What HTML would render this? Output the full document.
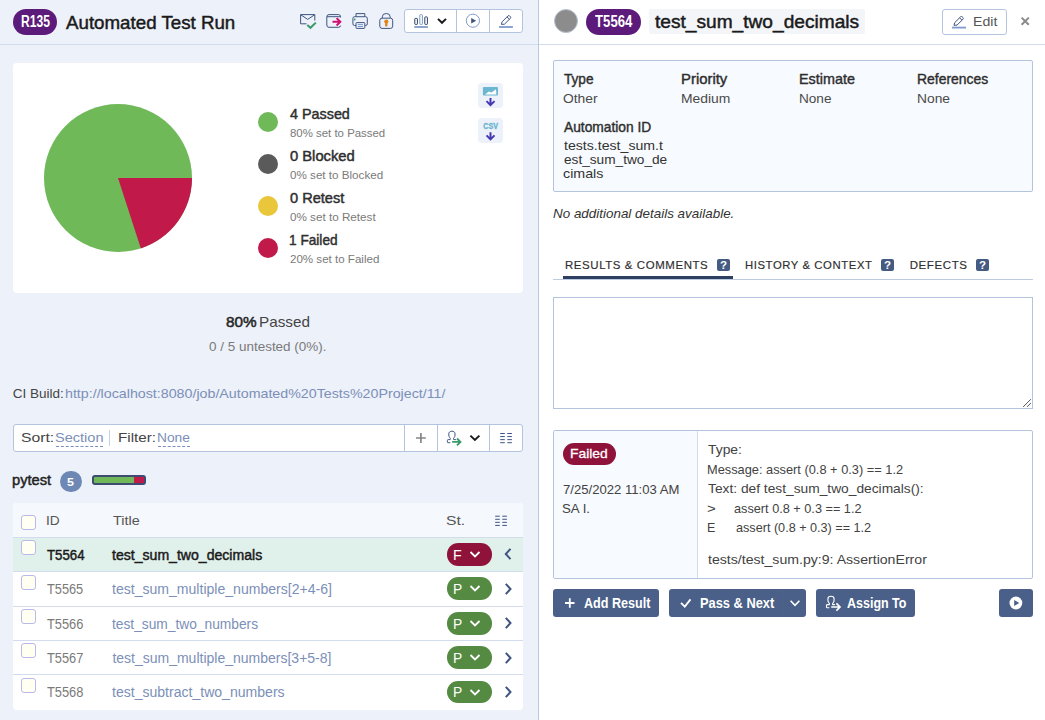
<!DOCTYPE html>
<html lang="en"><head><meta charset="utf-8"><title>Automated Test Run - TestRail</title>
<style>
html,body{margin:0;padding:0;}
body{width:1045px;height:720px;position:relative;overflow:hidden;background:#fff;font-family:"Liberation Sans",sans-serif;}
.b{position:absolute;display:block;}
.t{position:absolute;white-space:pre;transform-origin:0 50%;display:block;}
</style></head><body>
<div class="b" style="left:0px;top:0px;width:538px;height:720px;background:#edf1f9;"></div>
<div class="b" style="left:538px;top:0px;width:1px;height:720px;background:#bac8df;"></div>
<div class="b" style="left:0px;top:44px;width:538px;height:1px;background:#d3dcec;"></div>
<div class="b" style="left:539px;top:44px;width:506px;height:1px;background:#d3dcec;"></div>
<div class="b" style="left:13px;top:9px;width:44px;height:26px;background:#5c1a7a;border-radius:13px;"></div>
<span class="t" style="left:20.87px;top:13.63px;font-size:15.8px;line-height:15.8px;color:#fff;font-weight:bold;transform:scaleX(0.7662);">R135</span>
<span class="t" style="left:66.15px;top:14.63px;font-size:17.8px;line-height:17.8px;color:#1a1a1a;-webkit-text-stroke:0.45px #1a1a1a;transform:scaleX(1.0528);">Automated Test Run</span>
<div class="b" style="left:404px;top:9px;width:119px;height:24px;background:#fff;border:1px solid #b4c4de;border-radius:3px;box-sizing:border-box;"></div>
<div class="b" style="left:456px;top:10px;width:1px;height:22px;background:#b4c4de;"></div>
<div class="b" style="left:489px;top:10px;width:1px;height:22px;background:#b4c4de;"></div>
<svg class="b" style="left:296px;top:8px" width="228" height="26" viewBox="296 8 228 26"><path d="M306.5 23.8 H300.6 V14.6 H314.8 V20.5 M300.8 14.8 L307.7 19.4 L314.6 14.8" fill="none" stroke="#3f5480" stroke-width="1"/><path d="M307.3 25 L310.5 27.8 L315.8 22.6" fill="none" stroke="#3a9a6a" stroke-width="2"/><path d="M340.6 17.5 V16.8 Q340.6 14.6 338.4 14.6 H329 Q326.8 14.6 326.8 16.8 V25 Q326.8 27.3 329 27.3 H338.4 Q340.6 27.3 340.6 25.6 M327 16.7 H340.4" fill="none" stroke="#3f5480" stroke-width="1"/><path d="M332.5 21.8 H339.8 M336.6 18.1 L340.3 21.8 L336.6 25.5" fill="none" stroke="#d10f6f" stroke-width="2"/><path d="M356 16.5 V13.6 H364.8 V16.5 M356 25.5 H354.6 Q352.9 25.5 352.9 23.8 V18.4 Q352.9 16.7 354.6 16.7 H365.6 Q367.3 16.7 367.3 18.4 V23.8 Q367.3 25.5 365.6 25.5 H364.8" fill="none" stroke="#3f5480" stroke-width="1"/><rect x="356" y="22.6" width="8.8" height="5.8" rx="0.8" fill="#edf1f9" stroke="#3f5480" stroke-width="1"/><path d="M357.8 24.6 H363 M357.8 26.5 H363" stroke="#6a8fd0" stroke-width="0.9"/><circle cx="354.7" cy="19.5" r="0.9" fill="#3a9a6a"/><path d="M382.3 18 V16.8 Q382.3 13.5 386.25 13.5 Q390.2 13.5 390.2 16.8 V18" fill="none" stroke="#3f5480" stroke-width="1"/><rect x="379.8" y="18.2" width="12.9" height="10.2" rx="2.2" fill="none" stroke="#3f5480" stroke-width="1"/><circle cx="386.3" cy="21.5" r="2.1" fill="#e08516"/><rect x="385.1" y="21.6" width="2.4" height="4.9" rx="0.8" fill="#e08516"/><rect x="414.8" y="18.4" width="2.6" height="6" rx="0.6" fill="none" stroke="#2e4060" stroke-width="1"/><rect x="419.8" y="14.7" width="2.6" height="9.7" rx="0.6" fill="none" stroke="#7f9bcb" stroke-width="1"/><rect x="424.8" y="16.9" width="2.6" height="7.5" rx="0.6" fill="none" stroke="#2e4060" stroke-width="1"/><path d="M414.3 27 H427.9" stroke="#7f9bcb" stroke-width="1.8"/><path d="M438 18.9 L442 22.8 L446 18.9" fill="none" stroke="#1a1a1a" stroke-width="2"/><circle cx="472.9" cy="20.7" r="6.6" fill="none" stroke="#7f9bcb" stroke-width="1"/><path d="M471.2 17.9 L476.2 20.7 L471.2 23.5 Z" fill="#3f5480"/><path d="M501.4 24.4 L502.09999999999997 21.799999999999997 L508.0 15.899999999999999 Q508.79999999999995 15.2 509.59999999999997 15.899999999999999 L510.4 16.7 Q511.09999999999997 17.5 510.4 18.299999999999997 L504.4 24.2 Z M507.0 16.9 L509.4 19.299999999999997" fill="none" stroke="#3f5480" stroke-width="1" stroke-linejoin="round"/><path d="M499 27 H512.9" stroke="#7f9bcb" stroke-width="1.8"/></svg>
<div class="b" style="left:13px;top:63px;width:510px;height:230px;background:#fff;border-radius:4px;"></div>
<svg class="b" style="left:44px;top:104px" width="148" height="148" viewBox="-74 -74 148 148"><circle r="74" fill="#70b959"/><path d="M0 0 L74 0 A74 74 0 0 1 22.867 70.378 Z" fill="#c2194b"/></svg>
<div class="b" style="left:258px;top:112px;width:20px;height:20px;background:#70b959;border-radius:50%;"></div>
<span class="t" style="left:290.08px;top:106.53px;font-size:14.5px;line-height:14.5px;color:#2e2e2e;-webkit-text-stroke:0.45px #2e2e2e;transform:scaleX(0.9899);">4 Passed</span>
<span class="t" style="left:289.73px;top:128.27px;font-size:11.5px;line-height:11.5px;color:#7a7a7a;transform:scaleX(0.9929);">80% set to Passed</span>
<div class="b" style="left:258px;top:154px;width:20px;height:20px;background:#5a5a5a;border-radius:50%;"></div>
<span class="t" style="left:289.85px;top:148.53px;font-size:14.5px;line-height:14.5px;color:#2e2e2e;-webkit-text-stroke:0.45px #2e2e2e;transform:scaleX(1.0162);">0 Blocked</span>
<span class="t" style="left:289.96px;top:170.27px;font-size:11.5px;line-height:11.5px;color:#7a7a7a;transform:scaleX(1.0123);">0% set to Blocked</span>
<div class="b" style="left:258px;top:196px;width:20px;height:20px;background:#e9c63a;border-radius:50%;"></div>
<span class="t" style="left:289.85px;top:190.53px;font-size:14.5px;line-height:14.5px;color:#2e2e2e;-webkit-text-stroke:0.45px #2e2e2e;transform:scaleX(1.0047);">0 Retest</span>
<span class="t" style="left:289.96px;top:212.27px;font-size:11.5px;line-height:11.5px;color:#7a7a7a;transform:scaleX(1.0152);">0% set to Retest</span>
<div class="b" style="left:258px;top:238px;width:20px;height:20px;background:#c2194b;border-radius:50%;"></div>
<span class="t" style="left:289.33px;top:232.53px;font-size:14.5px;line-height:14.5px;color:#2e2e2e;-webkit-text-stroke:0.45px #2e2e2e;transform:scaleX(0.9413);">1 Failed</span>
<span class="t" style="left:289.59px;top:254.27px;font-size:11.5px;line-height:11.5px;color:#7a7a7a;transform:scaleX(1.0052);">20% set to Failed</span>
<div class="b" style="left:478px;top:83px;width:25px;height:25px;background:#edf1f9;border-radius:4px;"></div>
<div class="b" style="left:478px;top:118px;width:25px;height:25px;background:#edf1f9;border-radius:4px;"></div>
<svg class="b" style="left:478px;top:83px" width="25" height="60" viewBox="478 83 25 60"><rect x="482.9" y="86.9" width="15.1" height="8.7" rx="0.8" fill="#6bb6d0"/><path d="M485 94.4 L488.8 91.4 L491.5 92.4 L496 89.3 L496.4 94.4 Z" fill="#fff"/><path d="M490.5 98 V105.3 M486.5 101.1 L490.5 105.1 L494.5 101.1" fill="none" stroke="#4538b3" stroke-width="2"/><path d="M490.5 132.3 V139.6 M486.5 135.4 L490.5 139.4 L494.5 135.4" fill="none" stroke="#4538b3" stroke-width="2"/><text x="490.6" y="129.4" font-family="Liberation Sans, sans-serif" font-weight="bold" font-size="8.2" fill="#6bb6d0" stroke="#6bb6d0" stroke-width="0.35" text-anchor="middle" textLength="14.6" lengthAdjust="spacingAndGlyphs">CSV</text></svg>
<span class="t" style="left:225.95px;top:314.73px;font-size:14.5px;line-height:14.5px;color:#262626;-webkit-text-stroke:0.5px #262626;transform:scaleX(1.0555);">80%</span>
<span class="t" style="left:258.94px;top:314.73px;font-size:14.5px;line-height:14.5px;color:#444;transform:scaleX(1.0534);">Passed</span>
<span class="t" style="left:209.10px;top:339.60px;font-size:13px;line-height:13px;color:#7a7a7a;transform:scaleX(1.0358);">0 / 5 untested (0%).</span>
<span class="t" style="left:12.73px;top:386.57px;font-size:13.5px;line-height:13.5px;color:#444;">CI Build:</span>
<span class="t" style="left:64.99px;top:386.57px;font-size:13.5px;line-height:13.5px;color:#7b8fb8;transform:scaleX(1.0546);">http://localhost:8080/job/Automated%20Tests%20Project/11/</span>
<div class="b" style="left:13px;top:424px;width:510px;height:28px;background:#fff;border:1px solid #b4c4de;border-radius:3px;box-sizing:border-box;"></div>
<div class="b" style="left:404px;top:425px;width:1px;height:26px;background:#b4c4de;"></div>
<div class="b" style="left:437px;top:425px;width:1px;height:26px;background:#b4c4de;"></div>
<div class="b" style="left:489px;top:425px;width:1px;height:26px;background:#b4c4de;"></div>
<div class="b" style="left:109px;top:430px;width:1px;height:16px;background:#c5d0e4;"></div>
<span class="t" style="left:21.08px;top:431.17px;font-size:13.5px;line-height:13.5px;color:#444;transform:scaleX(1.1655);">Sort:</span>
<span class="t" style="left:54.99px;top:431.17px;font-size:13.5px;line-height:13.5px;color:#7b8fb8;transform:scaleX(1.0777);">Section</span>
<div class="b" style="left:56px;top:446px;width:47px;height:0px;border-top:1px dashed #7b8fb8;"></div>
<span class="t" style="left:117.78px;top:431.17px;font-size:13.5px;line-height:13.5px;color:#444;transform:scaleX(1.1254);">Filter:</span>
<span class="t" style="left:157.30px;top:431.17px;font-size:13.5px;line-height:13.5px;color:#7b8fb8;transform:scaleX(1.0192);">None</span>
<div class="b" style="left:158px;top:446px;width:32px;height:0px;border-top:1px dashed #7b8fb8;"></div>
<svg class="b" style="left:410px;top:428px" width="110" height="20" viewBox="410 428 110 20"><path d="M416 438 H425.8 M420.9 433.1 V442.9" stroke="#858585" stroke-width="1.7"/><path d="M449.90 442.70 H448.20 Q447.40 442.70 447.40 441.90 V440.40 Q447.40 439.60 448.20 439.60 H450.20 Q450.80 438.60 449.70 437.60 Q448.80 436.70 448.80 435.10 V433.90 C448.80 432.10 450.10 431.20 451.90 431.20 C453.70 431.20 455.00 432.10 455.00 433.90 V435.10 Q455.00 436.70 454.10 437.60 Q453.00 438.60 453.60 439.60 H455.50" fill="none" stroke="#3f5480" stroke-width="1" stroke-linecap="round"/><path d="M452.1 441.9 H460 M457 438.5 L460.4 441.9 L457 445.3" fill="none" stroke="#3a9a6a" stroke-width="1.9"/><path d="M470.4 435.6 L474.9 439.9 L479.4 435.6" fill="none" stroke="#1a1a1a" stroke-width="2"/><path d="M500.2 433.50 H504.8 M507.3 433.50 H511.9 M500.2 436.57 H504.8 M507.3 436.57 H511.9 M500.2 439.64 H504.8 M507.3 439.64 H511.9 M500.2 442.71 H504.8 M507.3 442.71 H511.9 " stroke="#3f5480" stroke-width="1"/></svg>
<span class="t" style="left:12.48px;top:472.73px;font-size:14.5px;line-height:14.5px;color:#222;-webkit-text-stroke:0.45px #222;transform:scaleX(1.0133);">pytest</span>
<div class="b" style="left:60px;top:471px;width:22px;height:21px;background:#6e88b5;border-radius:11px;"></div>
<span class="t" style="left:67.02px;top:476.87px;font-size:11.5px;line-height:11.5px;color:#fff;font-weight:bold;transform:scaleX(1.0824);">5</span>
<div class="b" style="left:92px;top:475px;width:54px;height:10px;background:#70b959;border:2px solid #3d4c70;border-radius:3px;box-sizing:border-box;overflow:hidden;"></div>
<div class="b" style="left:134px;top:477px;width:10px;height:6px;background:#c2194b;"></div>
<div class="b" style="left:13px;top:503px;width:510px;height:207px;background:#fff;border-radius:4px;"></div>
<div class="b" style="left:13px;top:503px;width:510px;height:34px;background:#f5f8fd;border-radius:4px 4px 0 0;"></div>
<div class="b" style="left:13px;top:537px;width:510px;height:35px;background:#e0f0ea;"></div>
<div class="b" style="left:13px;top:537px;width:510px;height:1px;background:#d3dcec;"></div>
<div class="b" style="left:13px;top:571px;width:510px;height:1px;background:#d3dcec;"></div>
<div class="b" style="left:13px;top:606px;width:510px;height:1px;background:#d3dcec;"></div>
<div class="b" style="left:13px;top:640px;width:510px;height:1px;background:#d3dcec;"></div>
<div class="b" style="left:13px;top:674px;width:510px;height:1px;background:#d3dcec;"></div>
<div class="b" style="left:21px;top:515px;width:15px;height:15px;background:#fffff2;border:1px solid #b9b9ea;border-radius:3px;box-sizing:border-box;"></div>
<span class="t" style="left:46.37px;top:513.57px;font-size:13.5px;line-height:13.5px;color:#555;transform:scaleX(1.0134);">ID</span>
<span class="t" style="left:112.96px;top:513.57px;font-size:13.5px;line-height:13.5px;color:#555;transform:scaleX(1.0681);">Title</span>
<span class="t" style="left:446.09px;top:513.57px;font-size:13.5px;line-height:13.5px;color:#555;transform:scaleX(1.1656);">St.</span>
<div class="b" style="left:21px;top:540px;width:15px;height:15px;background:#fffff2;border:1px solid #b9b9ea;border-radius:3px;box-sizing:border-box;"></div>
<span class="t" style="left:47.15px;top:547.75px;font-size:14px;line-height:14px;color:#1a1a1a;-webkit-text-stroke:0.45px #1a1a1a;transform:scaleX(0.9482);">T5564</span>
<span class="t" style="left:112.36px;top:547.75px;font-size:14px;line-height:14px;color:#1a1a1a;-webkit-text-stroke:0.45px #1a1a1a;transform:scaleX(1.0054);">test_sum_two_decimals</span>
<div class="b" style="left:447px;top:543.0px;width:45px;height:22.6px;background:#8f123a;border-radius:11.3px;"></div>
<span class="t" style="left:452.85px;top:548.45px;font-size:14px;line-height:14px;color:#fff;transform:scaleX(1.0101);">F</span>
<svg class="b" style="left:469px;top:549.8px" width="12" height="9" viewBox="0 0 12 9"><path d="M1.5 2 L6 6.5 L10.5 2" fill="none" stroke="#fff" stroke-width="1.8"/></svg>
<svg class="b" style="left:503px;top:547.3px" width="10" height="14" viewBox="0 0 10 14"><path d="M7.5 1.8 L2.8 7 L7.5 12.2" fill="none" stroke="#3f5480" stroke-width="2"/></svg>
<div class="b" style="left:21px;top:575px;width:15px;height:15px;background:#fffff2;border:1px solid #b9b9ea;border-radius:3px;box-sizing:border-box;"></div>
<span class="t" style="left:47.34px;top:582.15px;font-size:14px;line-height:14px;color:#7a7a7a;transform:scaleX(0.9112);">T5565</span>
<span class="t" style="left:112.28px;top:582.15px;font-size:14px;line-height:14px;color:#7b8fb8;transform:scaleX(1.0040);">test_sum_multiple_numbers[2+4-6]</span>
<div class="b" style="left:447px;top:577.2px;width:45px;height:22.6px;background:#548a42;border-radius:11.3px;"></div>
<span class="t" style="left:453.49px;top:581.65px;font-size:14px;line-height:14px;color:#fff;transform:scaleX(0.9880);">P</span>
<svg class="b" style="left:469px;top:584.0px" width="12" height="9" viewBox="0 0 12 9"><path d="M1.5 2 L6 6.5 L10.5 2" fill="none" stroke="#fff" stroke-width="1.8"/></svg>
<svg class="b" style="left:503px;top:581.5px" width="10" height="14" viewBox="0 0 10 14"><path d="M2.8 1.8 L7.5 7 L2.8 12.2" fill="none" stroke="#3f5480" stroke-width="2"/></svg>
<div class="b" style="left:21px;top:609px;width:15px;height:15px;background:#fffff2;border:1px solid #b9b9ea;border-radius:3px;box-sizing:border-box;"></div>
<span class="t" style="left:46.85px;top:616.75px;font-size:14px;line-height:14px;color:#7a7a7a;transform:scaleX(0.9163);">T5566</span>
<span class="t" style="left:112.39px;top:616.75px;font-size:14px;line-height:14px;color:#7b8fb8;transform:scaleX(0.9828);">test_sum_two_numbers</span>
<div class="b" style="left:447px;top:612.0px;width:45px;height:22.6px;background:#548a42;border-radius:11.3px;"></div>
<span class="t" style="left:453.25px;top:617.45px;font-size:14px;line-height:14px;color:#fff;transform:scaleX(0.9880);">P</span>
<svg class="b" style="left:469px;top:618.8px" width="12" height="9" viewBox="0 0 12 9"><path d="M1.5 2 L6 6.5 L10.5 2" fill="none" stroke="#fff" stroke-width="1.8"/></svg>
<svg class="b" style="left:503px;top:616.3px" width="10" height="14" viewBox="0 0 10 14"><path d="M2.8 1.8 L7.5 7 L2.8 12.2" fill="none" stroke="#3f5480" stroke-width="2"/></svg>
<div class="b" style="left:21px;top:643px;width:15px;height:15px;background:#fffff2;border:1px solid #b9b9ea;border-radius:3px;box-sizing:border-box;"></div>
<span class="t" style="left:47.34px;top:651.15px;font-size:14px;line-height:14px;color:#7a7a7a;transform:scaleX(0.9137);">T5567</span>
<span class="t" style="left:112.39px;top:651.15px;font-size:14px;line-height:14px;color:#7b8fb8;">test_sum_multiple_numbers[3+5-8]</span>
<div class="b" style="left:447px;top:646.2px;width:45px;height:22.6px;background:#548a42;border-radius:11.3px;"></div>
<span class="t" style="left:453.49px;top:650.65px;font-size:14px;line-height:14px;color:#fff;transform:scaleX(0.9880);">P</span>
<svg class="b" style="left:469px;top:653.0px" width="12" height="9" viewBox="0 0 12 9"><path d="M1.5 2 L6 6.5 L10.5 2" fill="none" stroke="#fff" stroke-width="1.8"/></svg>
<svg class="b" style="left:503px;top:650.5px" width="10" height="14" viewBox="0 0 10 14"><path d="M2.8 1.8 L7.5 7 L2.8 12.2" fill="none" stroke="#3f5480" stroke-width="2"/></svg>
<div class="b" style="left:21px;top:678px;width:15px;height:15px;background:#fffff2;border:1px solid #b9b9ea;border-radius:3px;box-sizing:border-box;"></div>
<span class="t" style="left:46.85px;top:685.15px;font-size:14px;line-height:14px;color:#7a7a7a;transform:scaleX(0.9167);">T5568</span>
<span class="t" style="left:112.28px;top:685.15px;font-size:14px;line-height:14px;color:#7b8fb8;transform:scaleX(1.0035);">test_subtract_two_numbers</span>
<div class="b" style="left:447px;top:680.7px;width:45px;height:22.6px;background:#548a42;border-radius:11.3px;"></div>
<span class="t" style="left:453.49px;top:685.15px;font-size:14px;line-height:14px;color:#fff;transform:scaleX(0.9880);">P</span>
<svg class="b" style="left:469px;top:687.5px" width="12" height="9" viewBox="0 0 12 9"><path d="M1.5 2 L6 6.5 L10.5 2" fill="none" stroke="#fff" stroke-width="1.8"/></svg>
<svg class="b" style="left:503px;top:685px" width="10" height="14" viewBox="0 0 10 14"><path d="M2.8 1.8 L7.5 7 L2.8 12.2" fill="none" stroke="#3f5480" stroke-width="2"/></svg>
<svg class="b" style="left:494px;top:514px" width="14" height="14" viewBox="494 514 14 14"><path d="M495.2 516.20 H499.8 M502.3 516.20 H506.9 M495.2 519.27 H499.8 M502.3 519.27 H506.9 M495.2 522.34 H499.8 M502.3 522.34 H506.9 M495.2 525.41 H499.8 M502.3 525.41 H506.9 " stroke="#3f5480" stroke-width="1"/></svg>
<div class="b" style="left:554px;top:9px;width:24px;height:24px;background:#8c8c8c;border:1px solid #b9c3d6;border-radius:50%;box-sizing:border-box;"></div>
<div class="b" style="left:586px;top:9px;width:55px;height:26px;background:#5c1a7a;border-radius:13px;"></div>
<span class="t" style="left:595.07px;top:13.63px;font-size:15.8px;line-height:15.8px;color:#fff;font-weight:bold;transform:scaleX(0.8342);">T5564</span>
<div class="b" style="left:649px;top:9px;width:216px;height:25px;background:#f3f5f9;border-radius:2px;"></div>
<span class="t" style="left:655.31px;top:13.63px;font-size:17.8px;line-height:17.8px;color:#1a1a1a;-webkit-text-stroke:0.45px #1a1a1a;transform:scaleX(1.0757);">test_sum_two_decimals</span>
<div class="b" style="left:942px;top:9px;width:65px;height:26px;background:#fff;border:1px solid #b4c4de;border-radius:3px;box-sizing:border-box;"></div>
<span class="t" style="left:972.89px;top:15.17px;font-size:13.5px;line-height:13.5px;color:#555;transform:scaleX(1.0459);">Edit</span>
<svg class="b" style="left:950px;top:12px" width="84" height="20" viewBox="950 12 84 20"><path d="M954 25.3 L954.7 22.7 L960.6 16.8 Q961.4 16.1 962.2 16.8 L963 17.6 Q963.7 18.4 963 19.200000000000003 L957 25.1 Z M959.6 17.8 L962 20.200000000000003" fill="none" stroke="#3f5480" stroke-width="1" stroke-linejoin="round"/><path d="M952 27.6 H966" stroke="#7f9bcb" stroke-width="1.8"/><path d="M1021.6 17.6 L1028.8 24.8 M1028.8 17.6 L1021.6 24.8" stroke="#8a8a8a" stroke-width="2"/></svg>
<div class="b" style="left:553px;top:60px;width:480px;height:132px;background:#f7fafe;border:1px solid #b4c4de;border-radius:2px;box-sizing:border-box;"></div>
<span class="t" style="left:564.32px;top:72.43px;font-size:14.5px;line-height:14.5px;color:#2e2e2e;-webkit-text-stroke:0.4px #2e2e2e;transform:scaleX(0.9383);">Type</span>
<span class="t" style="left:563.06px;top:91.60px;font-size:13px;line-height:13px;color:#4a4a4a;transform:scaleX(1.0639);">Other</span>
<span class="t" style="left:680.94px;top:72.43px;font-size:14.5px;line-height:14.5px;color:#2e2e2e;-webkit-text-stroke:0.4px #2e2e2e;transform:scaleX(1.0262);">Priority</span>
<span class="t" style="left:681.47px;top:91.60px;font-size:13px;line-height:13px;color:#4a4a4a;transform:scaleX(1.0685);">Medium</span>
<span class="t" style="left:799.38px;top:72.43px;font-size:14.5px;line-height:14.5px;color:#2e2e2e;-webkit-text-stroke:0.4px #2e2e2e;transform:scaleX(0.9907);">Estimate</span>
<span class="t" style="left:798.90px;top:91.60px;font-size:13px;line-height:13px;color:#4a4a4a;transform:scaleX(1.0449);">None</span>
<span class="t" style="left:916.84px;top:72.43px;font-size:14.5px;line-height:14.5px;color:#2e2e2e;-webkit-text-stroke:0.4px #2e2e2e;transform:scaleX(0.9600);">References</span>
<span class="t" style="left:917.48px;top:91.60px;font-size:13px;line-height:13px;color:#4a4a4a;transform:scaleX(1.0620);">None</span>
<span class="t" style="left:564.40px;top:119.73px;font-size:14.5px;line-height:14.5px;color:#2e2e2e;-webkit-text-stroke:0.4px #2e2e2e;transform:scaleX(0.9495);">Automation ID</span>
<span class="t" style="left:564.19px;top:138.60px;font-size:13px;line-height:13px;color:#333;transform:scaleX(1.0870);">tests.test_sum.t</span>
<span class="t" style="left:563.59px;top:152.60px;font-size:13px;line-height:13px;color:#333;transform:scaleX(1.0497);">est_sum_two_de</span>
<span class="t" style="left:563.33px;top:166.60px;font-size:13px;line-height:13px;color:#333;transform:scaleX(1.0967);">cimals</span>
<span class="t" style="left:553.20px;top:206.57px;font-size:13.5px;line-height:13.5px;color:#333;font-style:italic;transform:scaleX(0.9943);">No additional details available.</span>
<div class="b" style="left:553px;top:279px;width:480px;height:1px;background:#bdcae0;"></div>
<div class="b" style="left:563px;top:276px;width:170px;height:3.4px;background:#2e4060;"></div>
<span class="t" style="left:565.21px;top:259.67px;font-size:11.5px;line-height:11.5px;color:#2e2e2e;letter-spacing:0.6px;-webkit-text-stroke:0.15px #2e2e2e;transform:scaleX(0.9943);">RESULTS &amp; COMMENTS</span>
<span class="t" style="left:744.82px;top:259.67px;font-size:11.5px;line-height:11.5px;color:#2e2e2e;letter-spacing:0.6px;-webkit-text-stroke:0.15px #2e2e2e;transform:scaleX(0.9831);">HISTORY &amp; CONTEXT</span>
<span class="t" style="left:909.68px;top:259.67px;font-size:11.5px;line-height:11.5px;color:#2e2e2e;letter-spacing:0.6px;-webkit-text-stroke:0.15px #2e2e2e;">DEFECTS</span>
<div class="b" style="left:717px;top:258.5px;width:13px;height:12.2px;background:#465b82;border-radius:2px;"></div>
<span class="t" style="left:720.01px;top:261.14px;font-size:10px;line-height:10px;color:#fff;font-weight:bold;transform:scaleX(1.1546);">?</span>
<div class="b" style="left:881px;top:258.5px;width:13px;height:12.2px;background:#465b82;border-radius:2px;"></div>
<span class="t" style="left:884.01px;top:261.14px;font-size:10px;line-height:10px;color:#fff;font-weight:bold;transform:scaleX(1.1546);">?</span>
<div class="b" style="left:976px;top:258.5px;width:13px;height:12.2px;background:#465b82;border-radius:2px;"></div>
<span class="t" style="left:979.01px;top:261.14px;font-size:10px;line-height:10px;color:#fff;font-weight:bold;transform:scaleX(1.1546);">?</span>
<div class="b" style="left:553px;top:297px;width:480px;height:112px;background:#fff;border:1px solid #b4c4de;box-sizing:border-box;"></div>
<svg class="b" style="left:1020px;top:396px" width="12" height="12" viewBox="1020 396 12 12"><path d="M1023.2 406.9 L1030.9 399.2 M1027 406.9 L1030.9 403" stroke="#555" stroke-width="1" fill="none"/></svg>
<div class="b" style="left:553px;top:430px;width:480px;height:149px;background:#fff;border:1px solid #b4c4de;border-radius:2px;box-sizing:border-box;"></div>
<div class="b" style="left:554px;top:431px;width:143px;height:147px;background:#f7fafe;"></div>
<div class="b" style="left:697px;top:431px;width:1px;height:147px;background:#d3dcec;"></div>
<div class="b" style="left:563px;top:443px;width:53px;height:22px;background:#8f123a;border-radius:11px;"></div>
<span class="t" style="left:570.49px;top:447.17px;font-size:13.5px;line-height:13.5px;color:#fff;-webkit-text-stroke:0.3px #fff;transform:scaleX(1.0278);">Failed</span>
<span class="t" style="left:562.70px;top:482.60px;font-size:13px;line-height:13px;color:#424242;transform:scaleX(1.0078);">7/25/2022 11:03 AM</span>
<span class="t" style="left:561.73px;top:501.60px;font-size:13px;line-height:13px;color:#424242;transform:scaleX(1.0194);">SA I.</span>
<span class="t" style="left:708.32px;top:443.40px;font-size:13px;line-height:13px;color:#424242;transform:scaleX(1.0674);">Type:</span>
<span class="t" style="left:707.02px;top:462.80px;font-size:13px;line-height:13px;color:#424242;transform:scaleX(0.9848);">Message: assert (0.8 + 0.3) == 1.2</span>
<span class="t" style="left:708.00px;top:482.40px;font-size:13px;line-height:13px;color:#424242;transform:scaleX(1.0585);">Text: def test_sum_two_decimals():</span>
<span class="t" style="left:707.27px;top:501.80px;font-size:13px;line-height:13px;color:#424242;transform:scaleX(1.1555);">&gt;</span>
<span class="t" style="left:734.46px;top:501.80px;font-size:13px;line-height:13px;color:#424242;transform:scaleX(0.9777);">assert 0.8 + 0.3 == 1.2</span>
<span class="t" style="left:707.06px;top:521.40px;font-size:13px;line-height:13px;color:#424242;transform:scaleX(0.9598);">E</span>
<span class="t" style="left:735.86px;top:521.40px;font-size:13px;line-height:13px;color:#424242;transform:scaleX(0.9715);">assert (0.8 + 0.3) == 1.2</span>
<span class="t" style="left:707.72px;top:552.60px;font-size:13px;line-height:13px;color:#424242;transform:scaleX(1.0856);">tests/test_sum.py:9: AssertionError</span>
<div class="b" style="left:553px;top:589px;width:106px;height:28px;background:#4a6088;border-radius:3px;"></div>
<div class="b" style="left:669px;top:589px;width:137px;height:28px;background:#4a6088;border-radius:3px;"></div>
<div class="b" style="left:782px;top:589px;width:1px;height:28px;background:#4d638c;"></div>
<div class="b" style="left:816px;top:589px;width:99px;height:28px;background:#4a6088;border-radius:3px;"></div>
<div class="b" style="left:999px;top:589px;width:34px;height:28px;background:#4a6088;border-radius:3px;"></div>
<span class="t" style="left:584.09px;top:595.75px;font-size:14px;line-height:14px;color:#fff;font-weight:bold;transform:scaleX(0.8993);">Add Result</span>
<span class="t" style="left:699.86px;top:595.75px;font-size:14px;line-height:14px;color:#fff;font-weight:bold;transform:scaleX(0.9172);">Pass &amp; Next</span>
<span class="t" style="left:847.29px;top:595.75px;font-size:14px;line-height:14px;color:#fff;font-weight:bold;transform:scaleX(0.8924);">Assign To</span>
<svg class="b" style="left:553px;top:589px" width="480" height="28" viewBox="553 589 480 28"><path d="M565 603 H574.5 M569.8 598.3 V607.7" stroke="#fff" stroke-width="1.8"/><path d="M681 602.8 L684.8 606.6 L690.5 599.4" fill="none" stroke="#fff" stroke-width="1.8"/><path d="M790.6 600.7 L795 605.3 L799.4 600.7" fill="none" stroke="#fff" stroke-width="1.6"/><path d="M829.00 607.70 H827.30 Q826.50 607.70 826.50 606.90 V605.40 Q826.50 604.60 827.30 604.60 H829.30 Q829.90 603.60 828.80 602.60 Q827.90 601.70 827.90 600.10 V598.90 C827.90 597.10 829.20 596.20 831.00 596.20 C832.80 596.20 834.10 597.10 834.10 598.90 V600.10 Q834.10 601.70 833.20 602.60 Q832.10 603.60 832.70 604.60 H834.60" fill="none" stroke="#fff" stroke-width="1.1" stroke-linecap="round"/><path d="M831.2 607 H839.6 M836.4 603.3 L840 607 L836.4 610.7" fill="none" stroke="#fff" stroke-width="1.7"/><circle cx="1015.9" cy="603" r="6.4" fill="#fff"/><path d="M1014.2 600 L1019.2 603 L1014.2 606 Z" fill="#4a6088"/></svg>
</body></html>
